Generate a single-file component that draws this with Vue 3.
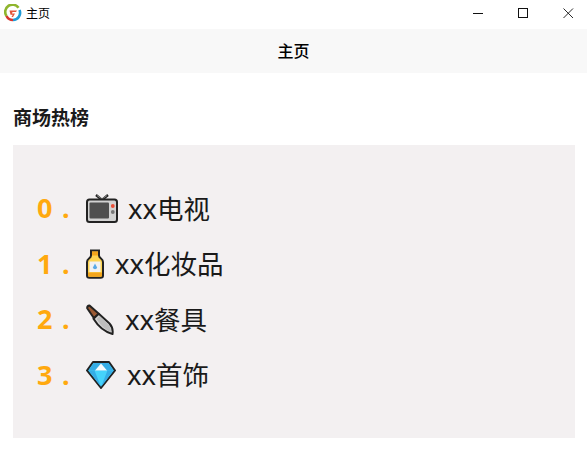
<script setup>
const items = [
  { id: "tv", latin: "xx", cjk: "电视", gap: 10 },
  { id: "bottle", latin: "xx", cjk: "化妆品", gap: 11 },
  { id: "knife", latin: "xx", cjk: "餐具", gap: 11 },
  { id: "gem", latin: "xx", cjk: "首饰", gap: 11 },
];
</script>

<template>
  <div class="page">
    <header class="titlebar">
      <svg class="logo" width="18" height="18" viewBox="0 0 18 18">
        <path d="M2.5 12A7.2 7.2 0 0 1 14.5 3.8" fill="none" stroke="#8fb52e" stroke-width="2.6" />
        <path d="M2.5 12A7.2 7.2 0 0 0 9 16" fill="none" stroke="#d8352e" stroke-width="2.6" />
        <path d="M9 16A7.2 7.2 0 0 0 15.5 6" fill="none" stroke="#1f9bd6" stroke-width="2.6" />
        <path d="M5.5 6.5H13L12 8H8.5L8 9.5H11L9 13H7.5L8.8 10.8H6.5Z" fill="#e4553a" />
      </svg>
      <span class="apptitle">主页</span>
      <div class="winbtns">
        <svg width="11" height="11" viewBox="0 0 11 11"><path d="M0 5.5H10" stroke="#111" /></svg>
        <svg width="11" height="11" viewBox="0 0 11 11"><rect x="0.5" y="0.5" width="9" height="9" fill="none" stroke="#111" /></svg>
        <svg width="11" height="11" viewBox="0 0 11 11"><path d="M0.5 0.5L10 10M10 0.5L0.5 10" stroke="#111" stroke-width="0.9" /></svg>
      </div>
    </header>

    <nav class="navbar">主页</nav>

    <main class="content">
      <h2 class="heading">商场热榜</h2>
      <section class="panel">
        <div v-for="(item, i) in items" :key="item.id" class="row">
          <span class="rank"><span class="num">{{ i }}</span><span class="dot">.</span></span>

          <svg v-if="item.id === 'tv'" class="icon" width="32" height="29" viewBox="0 0 32 29">
            <path d="M10 1L16 6L22 1" fill="none" stroke="#222" stroke-width="2.4" />
            <path d="M11 1.5L16 5L21 1.5" fill="none" stroke="#9a9a9a" stroke-width="0.8" />
            <rect x="1" y="5.5" width="30" height="22.5" rx="2.5" fill="#d2d2d2" stroke="#222" stroke-width="2" />
            <rect x="3.5" y="8.5" width="19.5" height="16" rx="1" fill="#4f4f4f" />
            <circle cx="26.8" cy="12" r="1.9" fill="#ea4f38" />
            <circle cx="26.8" cy="18" r="1.9" fill="#777" />
          </svg>

          <svg v-else-if="item.id === 'bottle'" class="icon" width="18" height="30" viewBox="0 0 18 30">
            <path d="M5 1.5H13V6.5Q13 8 15 9.5Q17 11 17 13V26.5Q17 28.8 14.5 28.8H3.5Q1 28.8 1 26.5V13Q1 11 3 9.5Q5 8 5 6.5Z" fill="#ffd551" stroke="#222" stroke-width="2" />
            <path d="M6 2.5H12V6.5H6Z" fill="#f3a51c" />
            <path d="M2 23.5H16V26.5Q16 27.8 14.5 27.8H3.5Q2 27.8 2 26.5Z" fill="#f3a51c" />
            <rect x="3.5" y="12.5" width="11" height="10.5" fill="#f2f2f2" />
            <path d="M9 14.5L11.2 18.8A2.4 2.4 0 0 1 6.8 18.8Z" fill="#5aa9e6" />
          </svg>

          <svg v-else-if="item.id === 'knife'" class="icon" width="28" height="32" viewBox="0 0 28 32">
            <path d="M3.5 1.5Q1 1.8 1.2 4.2L8 14.2L12.8 9.8Z" fill="#9b5a34" stroke="#222" stroke-width="2" stroke-linejoin="round" />
            <path d="M12.8 9.8L23.5 19.5Q27.5 24 26.5 30Q15 27 7.5 14.8Z" fill="#d8d8d8" stroke="#222" stroke-width="2" stroke-linejoin="round" />
            <path d="M13.5 12L22.5 20.5Q25.5 24 25.3 28.5Q17 25 10.5 15Z" fill="#bdbdbd" />
          </svg>

          <svg v-else class="icon" width="30" height="28" viewBox="0 0 30 28">
            <path d="M7 1H23L29 9.5L15 27L1 9.5Z" fill="#45d3fb" stroke="#222" stroke-width="2" stroke-linejoin="round" />
            <path d="M7.5 2H22.5L27.5 9.5H2.5Z" fill="#36ade6" />
            <path d="M2.5 9.5L8.5 9.5L15 26Z" fill="#36ade6" />
            <path d="M27.5 9.5L21.5 9.5L15 26Z" fill="#36ade6" />
            <path d="M15 2.5L21 9.5H9Z" fill="#f6fdff" />
          </svg>

          <span class="label" :style="{ marginLeft: item.gap + 'px' }"><span class="latin">{{ item.latin }}</span>{{ item.cjk }}</span>
        </div>
      </section>
    </main>
  </div>
</template>

<style scoped>
  .page {
    width: 587px;
    height: 473px;
    background: #fff;
    font-family: "Noto Sans", "Noto Sans CJK SC", sans-serif;
    color: #1a1a1a;
    overflow: hidden;
  }

  .titlebar {
    height: 29px;
    display: flex;
    align-items: center;
    padding: 0 0 3px 4px;
    box-sizing: border-box;
  }

  .logo {
    margin-right: 4px;
  }

  .apptitle {
    font-size: 12px;
    color: #000;
  }

  .winbtns {
    margin-left: auto;
    display: flex;
    align-items: center;
    gap: 34px;
    padding-right: 13px;
  }

  .navbar {
    height: 44px;
    line-height: 44px;
    background: #f8f8f8;
    text-align: center;
    font-size: 16px;
    font-weight: 500;
    color: #000;
  }

  .content {
    padding: 32px 12px 0 13px;
  }

  .heading {
    margin: 0 0 14px;
    font-size: 19px;
    line-height: 26px;
    font-weight: 700;
  }

  .panel {
    height: 293px;
    background: #f3f0f1;
    padding: 36px 0 0 24px;
    box-sizing: border-box;
  }

  .row {
    height: 55.5px;
    display: flex;
    align-items: center;
  }

  .rank {
    width: 49px;
    padding-bottom: 2px;
    display: flex;
    color: #ffa90f;
    font-size: 27px;
    font-weight: 700;
  }

  .num {
    width: 25px;
  }

  .label {
    font-size: 26.5px;
    line-height: 34px;
  }

  .latin {
    font-size: 27.5px;
  }
</style>
